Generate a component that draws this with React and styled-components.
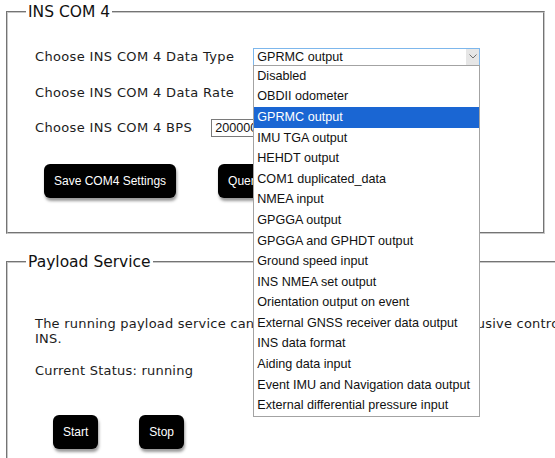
import React from "react";
import styled, { createGlobalStyle } from "styled-components";

const GlobalStyle = createGlobalStyle`
  html, body {
    margin: 0;
    padding: 0;
    overflow: hidden;
    background: #ffffff;
  }
  body {
    font-family: "DejaVu Sans", Verdana, sans-serif;
    color: #1c1c1c;
  }
`;

const Page = styled.div`
  padding-top: 3px;
  width: 700px;
`;

const Panel = styled.fieldset`
  box-sizing: border-box;
  width: ${({ $width }) => $width}px;
  margin: ${({ $top }) => $top}px 0 0 6px;
  padding: 0 18px ${({ $bottom }) => $bottom}px 18px;
  border: 2px groove #c8c8c8;
  min-width: 0;
`;

const Legend = styled.legend`
  padding: 0 2px;
  font-size: 15.5px;
  line-height: 18px;
  color: #111;
`;

const Rows = styled.div`
  display: flex;
  flex-direction: column;
  margin-top: 18px;
  padding-left: 9px;
`;

const FormRow = styled.div`
  display: flex;
  align-items: center;
  gap: 19px;
  height: 35.5px;
`;

const Label = styled.span`
  font-size: 13px;
  letter-spacing: 0.35px;
  white-space: nowrap;
`;

const SelectWrap = styled.div`
  position: relative;
`;

const SelectBox = styled.div`
  box-sizing: border-box;
  display: flex;
  align-items: center;
  width: ${({ $w }) => $w}px;
  height: 18px;
  border: 1px solid ${({ $focused }) => ($focused ? "#7db7ec" : "#7a7a7a")};
  background: #fff;
  font-family: "Liberation Sans", Arial, sans-serif;
  font-size: 12.6px;
  color: #111;
`;

const SelectText = styled.span`
  flex: 1;
  padding-left: 3px;
  white-space: nowrap;
  overflow: hidden;
`;

const ArrowBox = styled.span`
  display: flex;
  align-items: center;
  justify-content: center;
  width: 13px;
  align-self: stretch;
  background: #e6e6e6;
`;

const OptionList = styled.ul`
  position: absolute;
  z-index: 10;
  top: 17px;
  left: 0;
  box-sizing: border-box;
  width: 227px;
  margin: 0;
  padding: 0;
  list-style: none;
  background: #fff;
  border: 1px solid #a3a3a3;
  font-family: "Liberation Sans", Arial, sans-serif;
  font-size: 12.6px;
`;

const OptionItem = styled.li`
  height: 20.6px;
  line-height: 20.6px;
  padding-left: 3px;
  white-space: nowrap;
  color: ${({ $selected }) => ($selected ? "#fff" : "#111")};
  background: ${({ $selected }) => ($selected ? "#1a66d3" : "transparent")};
`;

const ButtonRow = styled.div`
  display: flex;
  gap: ${({ $gap }) => $gap}px;
  margin: ${({ $top }) => $top}px 0 0 ${({ $left }) => $left}px;
`;

const ActionButton = styled.button`
  height: 34px;
  padding: 0 10px;
  border: none;
  border-radius: 6px;
  background: #000;
  color: #fff;
  font-family: "Liberation Sans", Arial, sans-serif;
  font-size: 12px;
  box-shadow: 1px 3px 3px rgba(0, 0, 0, 0.4);
  cursor: pointer;
`;

const Body = styled.div`
  padding-left: 9px;
`;

const Paragraph = styled.p`
  margin: ${({ $top }) => $top}px 0 0 0;
  font-size: 13px;
  letter-spacing: 0.22px;
  line-height: 15px;
`;

const dataTypes = [
  "Disabled",
  "OBDII odometer",
  "GPRMC output",
  "IMU TGA output",
  "HEHDT output",
  "COM1 duplicated_data",
  "NMEA input",
  "GPGGA output",
  "GPGGA and GPHDT output",
  "Ground speed input",
  "INS NMEA set output",
  "Orientation output on event",
  "External GNSS receiver data output",
  "INS data format",
  "Aiding data input",
  "Event IMU and Navigation data output",
  "External differential pressure input",
];

const Chevron = () => (
  <svg width="8" height="5" viewBox="0 0 8 5">
    <polyline points="0.5,0.5 4,4 7.5,0.5" fill="none" stroke="#707070" strokeWidth="1" />
  </svg>
);

const App = () => {
  const selected = "GPRMC output";

  return (
    <>
      <GlobalStyle />
      <Page>
        <Panel $width={539} $top={0} $bottom={34}>
          <Legend>INS COM 4</Legend>
          <Rows>
            <FormRow>
              <Label>Choose INS COM 4 Data Type</Label>
              <SelectWrap>
                <SelectBox $w={227} $focused>
                  <SelectText>{selected}</SelectText>
                  <ArrowBox>
                    <Chevron />
                  </ArrowBox>
                </SelectBox>
                <OptionList role="listbox">
                  {dataTypes.map((t) => (
                    <OptionItem key={t} $selected={t === selected}>
                      {t}
                    </OptionItem>
                  ))}
                </OptionList>
              </SelectWrap>
            </FormRow>
            <FormRow>
              <Label>Choose INS COM 4 Data Rate</Label>
              <SelectBox $w={80}>
                <SelectText>10 Hz</SelectText>
              </SelectBox>
            </FormRow>
            <FormRow>
              <Label>Choose INS COM 4 BPS</Label>
              <SelectBox $w={80}>
                <SelectText>200000</SelectText>
              </SelectBox>
            </FormRow>
          </Rows>
          <ButtonRow $gap={42} $top={18.5} $left={18}>
            <ActionButton>Save COM4 Settings</ActionButton>
            <ActionButton>Query COM4 Settings</ActionButton>
          </ButtonRow>
        </Panel>

        <Panel $width={650} $top={19} $bottom={20}>
          <Legend>Payload Service</Legend>
          <Body>
            <Paragraph $top={45}>
              The running payload service can be stopped in order to have
              exclusive control of the INS.
            </Paragraph>
            <Paragraph $top={17}>Current Status: running</Paragraph>
            <ButtonRow $gap={41} $top={36.5} $left={18}>
              <ActionButton>Start</ActionButton>
              <ActionButton>Stop</ActionButton>
            </ButtonRow>
          </Body>
        </Panel>
      </Page>
    </>
  );
};

export default App;
